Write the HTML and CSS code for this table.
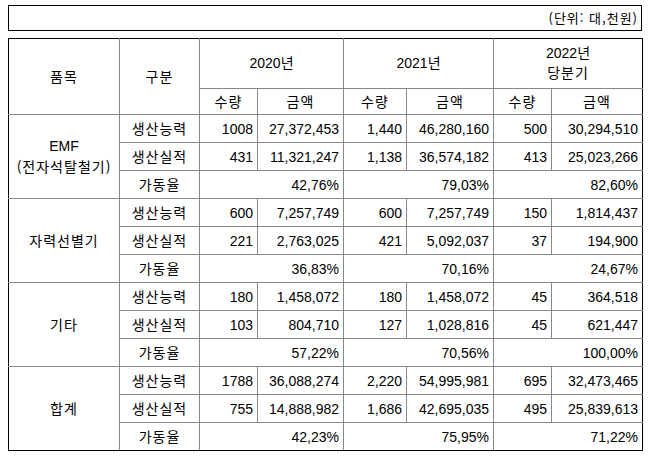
FILE: index.html
```html
<!DOCTYPE html>
<html lang="ko">
<head>
<meta charset="utf-8">
<link rel="stylesheet" href="styles.css">
</head>
<body>
<div class="unit">(단위: 대,천원)</div>
<table class="t">
<colgroup>
<col class="c1"><col class="c2"><col class="c3"><col class="c4"><col class="c5"><col class="c6"><col class="c7"><col class="c8">
</colgroup>
<thead>
<tr class="h1">
<th rowspan="2" class="l"><span class="k">품목</span></th>
<th rowspan="2"><span class="k">구분</span></th>
<th colspan="2">2020년</th>
<th colspan="2">2021년</th>
<th colspan="2" class="r">2022년<br><span class="k">당분기</span></th>
</tr>
<tr class="h2">
<th><span class="k">수량</span></th><th><span class="k">금액</span></th>
<th><span class="k">수량</span></th><th><span class="k">금액</span></th>
<th><span class="k">수량</span></th><th class="r"><span class="k">금액</span></th>
</tr>
</thead>
<tbody>
<tr>
<td rowspan="3" class="g l">EMF<br><span class="k">(전자석탈철기)</span></td>
<td class="g"><span class="k">생산능력</span></td>
<td class="n">1008</td><td class="n">27,372,453</td><td class="n">1,440</td><td class="n">46,280,160</td><td class="n">500</td><td class="n r">30,294,510</td>
</tr>
<tr>
<td class="g"><span class="k">생산실적</span></td>
<td class="n">431</td><td class="n">11,321,247</td><td class="n">1,138</td><td class="n">36,574,182</td><td class="n">413</td><td class="n r">25,023,266</td>
</tr>
<tr>
<td class="g"><span class="k">가동율</span></td>
<td class="n" colspan="2">42,76%</td><td class="n" colspan="2">79,03%</td><td class="n r" colspan="2">82,60%</td>
</tr>
<tr>
<td rowspan="3" class="g l"><span class="k">자력선별기</span></td>
<td class="g"><span class="k">생산능력</span></td>
<td class="n">600</td><td class="n">7,257,749</td><td class="n">600</td><td class="n">7,257,749</td><td class="n">150</td><td class="n r">1,814,437</td>
</tr>
<tr>
<td class="g"><span class="k">생산실적</span></td>
<td class="n">221</td><td class="n">2,763,025</td><td class="n">421</td><td class="n">5,092,037</td><td class="n">37</td><td class="n r">194,900</td>
</tr>
<tr>
<td class="g"><span class="k">가동율</span></td>
<td class="n" colspan="2">36,83%</td><td class="n" colspan="2">70,16%</td><td class="n r" colspan="2">24,67%</td>
</tr>
<tr>
<td rowspan="3" class="g l"><span class="k">기타</span></td>
<td class="g"><span class="k">생산능력</span></td>
<td class="n">180</td><td class="n">1,458,072</td><td class="n">180</td><td class="n">1,458,072</td><td class="n">45</td><td class="n r">364,518</td>
</tr>
<tr>
<td class="g"><span class="k">생산실적</span></td>
<td class="n">103</td><td class="n">804,710</td><td class="n">127</td><td class="n">1,028,816</td><td class="n">45</td><td class="n r">621,447</td>
</tr>
<tr>
<td class="g"><span class="k">가동율</span></td>
<td class="n" colspan="2">57,22%</td><td class="n" colspan="2">70,56%</td><td class="n r" colspan="2">100,00%</td>
</tr>
<tr>
<td rowspan="3" class="g l b"><span class="k">합계</span></td>
<td class="g"><span class="k">생산능력</span></td>
<td class="n">1788</td><td class="n">36,088,274</td><td class="n">2,220</td><td class="n">54,995,981</td><td class="n">695</td><td class="n r">32,473,465</td>
</tr>
<tr>
<td class="g"><span class="k">생산실적</span></td>
<td class="n">755</td><td class="n">14,888,982</td><td class="n">1,686</td><td class="n">42,695,035</td><td class="n">495</td><td class="n r">25,839,613</td>
</tr>
<tr>
<td class="g b"><span class="k">가동율</span></td>
<td class="n b" colspan="2">42,23%</td><td class="n b" colspan="2">75,95%</td><td class="n r b" colspan="2">71,22%</td>
</tr>
</tbody>
</table>
</body>
</html>
```

FILE: styles.css
```css
html, body {
  margin: 0;
  background: #fff;
}
body {
  padding: 5px 8px 0;
  font-family: "Liberation Sans", "Noto Sans CJK KR", sans-serif;
  font-size: 14px;
  color: #000;
}
.k {
  font-family: "Noto Sans CJK KR", sans-serif;
  font-size: 14px;
  letter-spacing: 1px;
}
.unit {
  box-sizing: border-box;
  width: 634px;
  height: 26px;
  border: 1px solid #000;
  text-align: right;
  line-height: 24px;
  padding-right: 3px;
  font-family: "Noto Sans CJK KR", sans-serif;
  font-size: 13px;
  letter-spacing: 1px;
}
.t {
  margin-top: 7px;
  border-collapse: collapse;
  table-layout: fixed;
  width: 634px;
}
.c1 { width: 111px; }
.c2 { width: 80px; }
.c3 { width: 58px; }
.c4 { width: 86px; }
.c5 { width: 63px; }
.c6 { width: 87px; }
.c7 { width: 58px; }
.c8 { width: 91px; }
.t th, .t td {
  border: 1px solid #888;
  padding: 0 4px;
  font-weight: normal;
  white-space: nowrap;
  overflow: hidden;
}
.t th {
  text-align: center;
  line-height: 19px;
}
.h1 th { border-top-color: #000; height: 49px; }
.h2 th { height: 25px; }
.t td { height: 27px; line-height: 20px; }
.t td.g { text-align: center; padding: 0; }
.t td.n { text-align: right; }
.t .l { border-left-color: #000; }
.t .r { border-right-color: #000; }
.t .b { border-bottom-color: #000; }
```
